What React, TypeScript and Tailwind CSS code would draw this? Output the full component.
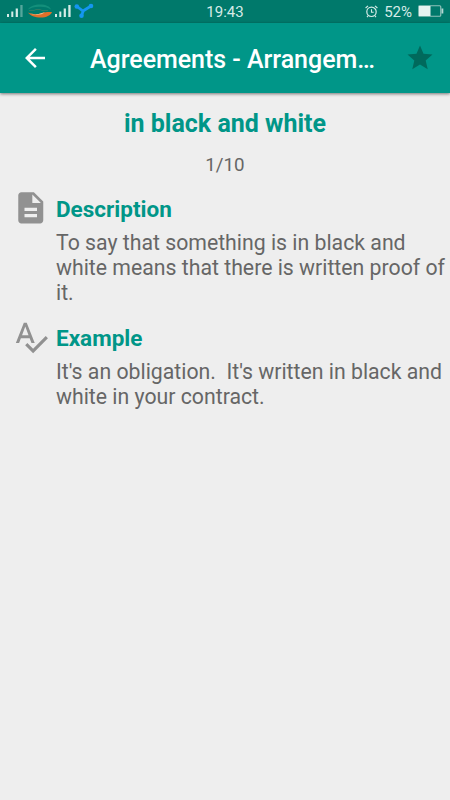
import React from 'react';

const Icon: React.FC<{ d: string; className: string }> = ({ d, className }) => (
  <svg viewBox="0 0 24 24" fill="currentColor" className={`shrink-0 ${className}`}>
    <path d={d} />
  </svg>
);

const icons = {
  back: 'M20 11H7.83l5.59-5.59L12 4l-8 8 8 8 1.41-1.41L7.83 13H20v-2z',
  star: 'M12 17.27L18.18 21l-1.64-7.03L22 9.24l-7.19-.61L12 2 9.19 8.63 2 9.24l5.46 4.73L5.82 21z',
  description:
    'M14 2H6c-1.1 0-1.99.9-1.99 2L4 20c0 1.1.89 2 1.99 2H18c1.1 0 2-.9 2-2V8l-6-6zm2 16H8v-2h8v2zm0-4H8v-2h8v2zm-3-5V3.5L18.5 9H13z',
  spellcheck:
    'M12.45 16h2.09L9.43 3H7.57L2.46 16h2.09l1.12-3h5.64l1.14 3zm-6.02-5L8.5 5.48 10.57 11H6.43zm15.16.59l-8.09 8.09L9.83 16l-1.41 1.41 5.09 5.09L23 13l-1.41-1.41z',
};

// Signal strength bars; the first SIM has a dimmed last bar
const Signal: React.FC<{ weak?: boolean }> = ({ weak }) => (
  <svg width="16" height="12" viewBox="0 0 16 12" fill="#d5ebe7" className="shrink-0">
    <rect x="0" y="9" width="2" height="3" />
    <rect x="4.300" y="6.500" width="2" height="5.500" />
    <rect x="8.700" y="3.500" width="2.200" height="8.500" />
    <rect x="13.300" y="0" width="2.300" height="12" opacity={weak ? 0.4 : 1} />
  </svg>
);

const StatusBar: React.FC = () => (
  <div className="flex h-[22.5px] shrink-0 items-center justify-between bg-[#00796b] text-[#d5ebe7]">
    <div className="flex w-[150px] items-center pl-[7px]">
      <Signal weak />
      {/* carrier logo */}
      <svg width="26" height="16" viewBox="0 0 26 16" className="ml-[4px] shrink-0">
        <path d="M1 6.500C3 3 8 1.500 13 1.500c6 0 10 2 11 5-4-2.500-8-3-12-2.700C7 4 4 5 1 6.500z" fill="#138f7b" />
        <path d="M2 7.500h5l2-1h4l2 1h6" fill="none" stroke="#2d7c65" strokeWidth="1" />
        <path d="M1 9.500c4 2 9 2.300 14 .5 3-1 6-1.300 10-1-1 3.500-6 5.500-11 5.500-6 0-11-2-13-5z" fill="#e0702a" />
        <path d="M1 9.500c4 2 9 2.300 14 .5l3-.8c-4 3.300-11 3.300-17 .3z" fill="#f0c69c" />
      </svg>
      <div className="ml-[2px] flex items-center">
        <Signal />
        <svg width="21" height="16" viewBox="0 0 21 16" className="ml-[3px] shrink-0 text-[#1496f0]">
          <path d="M3 3.500L9 8l8-5M9.500 7.500l-2 5" fill="none" stroke="currentColor" strokeWidth="2.800" />
          <circle cx="2.800" cy="3.500" r="2.300" fill="currentColor" />
          <circle cx="17" cy="3" r="2.300" fill="currentColor" />
          <circle cx="7.500" cy="12.800" r="2.300" fill="currentColor" />
        </svg>
      </div>
    </div>
    <span className="pt-[2px] text-[15px] leading-none">19:43</span>
    <div className="flex w-[150px] items-center justify-end pr-[6px]">
      <svg width="13" height="13" viewBox="0 0 13 13" fill="none" stroke="currentColor" className="mr-[6px]">
        <circle cx="6.500" cy="6.800" r="4.700" strokeWidth="1.200" />
        <path d="M6.500 4.300v2.900h2.200M.6 3L3 .8M12.400 3L10 .8M3.300 10.500L2 12.200M9.700 10.500l1.300 1.700" strokeWidth="1.100" />
      </svg>
      <span className="mr-[6px] pt-[2px] text-[15px] leading-none">52%</span>
      <svg width="26" height="12" viewBox="0 0 26 12">
        <rect x=".75" y=".75" width="22" height="10.500" rx="1" fill="none" stroke="#8fc2ba" strokeWidth="1.200" />
        <rect x="1" y="1" width="11.500" height="10" fill="#e6f3f1" />
        <rect x="23.500" y="3.500" width="1.800" height="5" fill="#b5d8d3" />
      </svg>
    </div>
  </div>
);

const AppBar: React.FC = () => (
  <header className="flex h-[70px] shrink-0 items-center bg-[#009688] pl-5 pr-[15px] shadow-[0_1px_3px_rgba(0,0,0,0.5)]">
    <Icon d={icons.back} className="size-[30px] text-white" />
    <h1 className="ml-10 flex-1 pt-[4px] text-[25px] font-medium leading-[30px] tracking-[-0.03px] text-white">
      Agreements - Arrangem…
    </h1>
    <Icon d={icons.star} className="size-[30px] text-[#00695c]" />
  </header>
);

const Section: React.FC<{ icon: string; title: string; lines: string[] }> = ({ icon, title, lines }) => (
  <section className="flex">
    <Icon d={icon} className="-ml-[0.5px] size-[37.5px] text-[#919191]" />
    <div className="ml-[6.5px] pt-[7px]">
      <h3 className="text-[22.5px] font-bold leading-[27px] text-[#009688]">{title}</h3>
      <div className="mt-[7px] text-[21.25px] leading-[25px] text-[#666]">
        {lines.map((line) => (
          <p key={line} className="whitespace-pre">
            {line}
          </p>
        ))}
      </div>
    </div>
  </section>
);

export default function App() {
  return (
    <div className="flex h-[800px] w-[450px] flex-col overflow-hidden bg-[#eee] font-['Roboto',sans-serif]">
      <StatusBar />
      <AppBar />
      <main className="flex flex-col pt-[16px]">
        <h2 className="text-center text-[25px] font-bold leading-[30px] text-[#009688]">in black and white</h2>
        <p className="mt-[14px] text-center text-[18.75px] leading-[24px] text-[#666]">1/10</p>
        <div className="mt-[12px] flex flex-col gap-[13px] pl-[12.5px]">
          <Section
            icon={icons.description}
            title="Description"
            lines={['To say that something is in black and', 'white means that there is written proof of', 'it.']}
          />
          <Section
            icon={icons.spellcheck}
            title="Example"
            lines={["It's an obligation.  It's written in black and", 'white in your contract.']}
          />
        </div>
      </main>
    </div>
  );
}
